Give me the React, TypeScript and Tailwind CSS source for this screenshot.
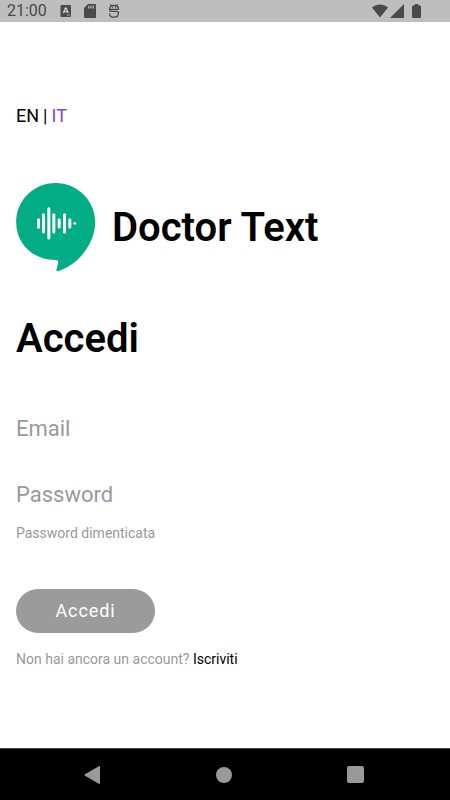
import React, { useState } from 'react';

const StatusBar: React.FC = () => (
  <header className="flex h-[22px] items-center justify-between bg-[#bebebe] pl-[7px] pr-[29px] text-[#4a4a4a]">
    <div className="flex items-center">
      <span className="w-[53px] text-base leading-5">21:00</span>
      <svg className="mr-3 h-3 w-3" viewBox="0 0 12 12" fill="currentColor" aria-hidden="true">
        <rect x="0.5" y="0" width="10.5" height="12" rx="1" />
        <path d="M3.4 8.3 5.3 3.2h1l1.9 5.1M4.2 6.6h3.2" fill="none" stroke="#d0d0d0" strokeWidth="1.3" />
        <path d="M7 10.1h3" stroke="#bebebe" strokeWidth="0.8" />
      </svg>
      <svg className="mr-3 h-[14px] w-3" viewBox="0 0 12 14" fill="currentColor" aria-hidden="true">
        <path d="M4 0h7a1 1 0 0 1 1 1v12a1 1 0 0 1-1 1H1a1 1 0 0 1-1-1V4Z" />
        <path d="M4.7 1.8v2.7M7 1.8v2.7M9.3 1.8v2.7" stroke="#bebebe" strokeWidth="1.2" />
      </svg>
      <svg className="h-[14px] w-3" viewBox="0 0 12 14" fill="none" stroke="currentColor" strokeWidth="1.3" aria-hidden="true">
        <path d="M2.3 0.3 3.5 2M9.7 0.3 8.5 2M1.6 5.4V4.9C1.6 2.9 3.4 1.5 6 1.5s4.4 1.4 4.4 3.4v.5H1.6c0 1.3.8 1.9 2 1.9h4.8c1.2 0 2 .6 2 1.7 0 2.5-1.8 4.2-4.4 4.2S1.6 11.6 1.6 9.4" />
        <path d="M4 3.5h.8M7.2 3.5H8" />
      </svg>
    </div>
    <div className="flex items-center">
      <svg className="mr-[2px] h-[14px] w-4" viewBox="0 0 16 14" fill="currentColor" aria-hidden="true">
        <path d="M0 3.5C4.8-.5 11.2-.5 16 3.5L8 13.5Z" />
      </svg>
      <svg className="mr-2 h-[14px] w-[14px]" viewBox="0 0 14 14" fill="currentColor" aria-hidden="true">
        <path d="M14 0v14H0Z" />
      </svg>
      <svg className="h-[14px] w-[9px]" viewBox="0 0 9 14" fill="currentColor" aria-hidden="true">
        <path d="M2.7 0h3.6v1.4H8a1 1 0 0 1 1 1V13a1 1 0 0 1-1 1H1a1 1 0 0 1-1-1V2.4a1 1 0 0 1 1-1h1.7Z" />
      </svg>
    </div>
  </header>
);

const Logo: React.FC = () => (
  <svg className="h-[89px] w-20 shrink-0" viewBox="1 0 239 267" aria-hidden="true">
    <path
      d="M119 0C185 0 238 52 238 118C238 180 191 243 128 264C124 266 121 264 122 260L127 240C128 234 126 231 119 231C53 231 1 184 1 118C1 52 53 0 119 0Z"
      fill="#02ad85"
    />
    <path
      d="M68 110v23M83 95v52M99 77v88M114 95v52M130 110v22M146 95v52M162 110v22"
      stroke="#fff"
      strokeWidth="9"
      strokeLinecap="round"
    />
    <circle cx="177" cy="121" r="4" fill="#fff" />
  </svg>
);

const NavBar: React.FC = () => (
  <nav className="flex h-[52px] items-center justify-between border-t border-[#444] bg-black pr-[86px] pl-[84px] text-[#999]">
    <button type="button" aria-label="Indietro">
      <svg className="h-[18px] w-4" viewBox="0 0 16 18" fill="currentColor">
        <path d="M14.8.2Q16-.4 16 1v16q0 1.4-1.2.8L1 9.8q-1-.8 0-1.6Z" />
      </svg>
    </button>
    <button type="button" aria-label="Home" className="h-4 w-4 rounded-full bg-[#999]" />
    <button type="button" aria-label="Recenti" className="h-[17px] w-[17px] rounded-xs bg-[#999]" />
  </nav>
);

export default function App() {
  const [email, setEmail] = useState('');
  const [password, setPassword] = useState('');

  return (
    <div className="flex min-h-screen flex-col bg-white font-['Roboto',sans-serif] text-black">
      <StatusBar />

      <main className="flex-1 px-4 pt-20">
        {/* Language */}
        <div className="flex gap-1 text-lg leading-7">
          <a href="#en">EN</a>
          <span>|</span>
          <a href="#it" className="text-[#8445bd]">IT</a>
        </div>

        <div className="mt-[53px] flex items-center gap-4">
          <Logo />
          <h1 className="text-[40px] leading-12 font-semibold">Doctor Text</h1>
        </div>

        <h2 className="mt-[43px] text-[40px] leading-12 font-semibold">Accedi</h2>

        <form className="mt-[49px]" onSubmit={(e) => e.preventDefault()}>
          <input
            type="email"
            aria-label="Email"
            placeholder="Email"
            value={email}
            onChange={(e) => setEmail(e.target.value)}
            className="block h-8 w-full text-[22px] outline-none placeholder:text-[#999]"
          />
          <input
            type="password"
            aria-label="Password"
            placeholder="Password"
            value={password}
            onChange={(e) => setPassword(e.target.value)}
            className="mt-[34px] block h-8 w-full text-[22px] outline-none placeholder:text-[#999]"
          />
          <a href="#recupera" className="mt-[13px] block text-sm text-[#999]">Password dimenticata</a>
          <button
            type="submit"
            className="mt-[46px] block h-11 w-[139px] rounded-full bg-[#9b9b9b] text-lg tracking-wider text-white"
          >
            Accedi
          </button>
        </form>

        <p className="mt-4 text-sm text-[#999]">
          Non hai ancora un account? <a href="#iscriviti" className="text-black">Iscriviti</a>
        </p>
      </main>

      <NavBar />
    </div>
  );
}
